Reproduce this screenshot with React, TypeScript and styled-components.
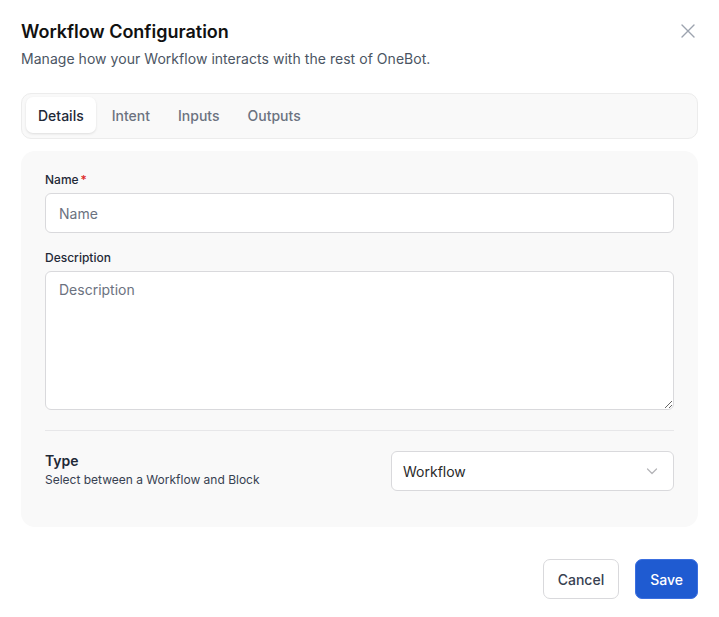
import styled, { createGlobalStyle } from "styled-components";

const GlobalStyle = createGlobalStyle`
  html, body {
    margin: 0;
    padding: 0;
    background: #ffffff;
    font-family: Inter, "Noto Sans", sans-serif;
    color: #111827;
  }
  * { box-sizing: border-box; }
`;

const tabs = ["Details", "Intent", "Inputs", "Outputs"];

const App = () => {
  return (
    <>
      <GlobalStyle />
      <Dialog>
        <Header>
          <HeaderText>
            <Title>Workflow Configuration</Title>
            <Subtitle>Manage how your Workflow interacts with the rest of OneBot.</Subtitle>
          </HeaderText>
          <CloseButton aria-label="Close">
            <svg width="16" height="16" viewBox="0 0 16 16" fill="none">
              <path d="M2 2L14 14M14 2L2 14" stroke="#9ca3af" strokeWidth="1.4" strokeLinecap="round" />
            </svg>
          </CloseButton>
        </Header>

        <TabList>
          {tabs.map((t, i) => (
            <Tab key={t} active={i === 0}>
              {t}
            </Tab>
          ))}
        </TabList>

        <Card>
          <Field>
            <Label>
              Name<Required>*</Required>
            </Label>
            <Input placeholder="Name" />
          </Field>
          <Field>
            <Label>Description</Label>
            <TextArea placeholder="Description" />
          </Field>
          <Divider />
          <TypeRow>
            <div>
              <TypeTitle>Type</TypeTitle>
              <TypeHint>Select between a Workflow and Block</TypeHint>
            </div>
            <Select>
              <span>Workflow</span>
              <svg width="14" height="14" viewBox="0 0 14 14" fill="none">
                <path d="M2.5 5L7 9.5L11.5 5" stroke="#b4b4b8" strokeWidth="1.2" strokeLinecap="round" strokeLinejoin="round" />
              </svg>
            </Select>
          </TypeRow>
        </Card>

        <Footer>
          <Button>Cancel</Button>
          <Button primary>Save</Button>
        </Footer>
      </Dialog>
    </>
  );
};

const Dialog = styled.div`
  width: 719px;
  padding: 18px 21px 18px 21px;
  display: flex;
  flex-direction: column;
`;

const Header = styled.div`
  display: flex;
  justify-content: space-between;
  align-items: flex-start;
`;

const HeaderText = styled.div`
  display: flex;
  flex-direction: column;
  gap: 3px;
`;

const Title = styled.h2`
  margin: 0;
  font-size: 18px;
  line-height: 28px;
  font-weight: 600;
  color: #111111;
`;

const Subtitle = styled.p`
  margin: 0;
  font-size: 14px;
  line-height: 20px;
  color: #4b5563;
  letter-spacing: 0.04px;
`;

const CloseButton = styled.button`
  border: none;
  background: none;
  padding: 0;
  margin: 4px 1px 0 0;
  width: 18px;
  height: 18px;
  display: flex;
  align-items: center;
  justify-content: center;
  cursor: pointer;
`;

const TabList = styled.div`
  margin-top: 24px;
  height: 46px;
  padding: 4px;
  display: flex;
  background: #f9f9f9;
  border: 1px solid #ececec;
  border-radius: 10px;
`;

const Tab = styled.button<{ active?: boolean }>`
  height: 36px;
  padding: 0 12px;
  margin: -1px 4px 0 0;
  border: none;
  border-radius: 7px;
  font-family: inherit;
  font-size: 14px;
  font-weight: 500;
  color: ${(p) => (p.active ? "#1f2937" : "#6b7280")};
  background: ${(p) => (p.active ? "#ffffff" : "transparent")};
  box-shadow: ${(p) => (p.active ? "0 1px 3px rgba(0,0,0,0.08), 0 1px 2px rgba(0,0,0,0.04)" : "none")};
  cursor: pointer;
`;

const Card = styled.div`
  margin-top: 12px;
  background: #f9f9f9;
  border-radius: 14px;
  padding: 21px 24px 36px;
  display: flex;
  flex-direction: column;
  gap: 17px;
`;

const Field = styled.div`
  display: flex;
  flex-direction: column;
  gap: 5px;
`;

const Label = styled.label`
  font-size: 12px;
  line-height: 16px;
  font-weight: 500;
  color: #1f2937;
`;

const Required = styled.span`
  color: #dc2626;
  margin-left: 2px;
`;

const inputBase = `
  width: 100%;
  border: 1px solid #d9d9dc;
  border-radius: 6px;
  background: #ffffff;
  font-family: Inter, "Noto Sans", sans-serif;
  font-size: 14px;
  color: #111827;
  outline: none;
  &::placeholder { color: #6b7280; }
`;

const Input = styled.input`
  ${inputBase}
  height: 40px;
  padding: 0 13px;
`;

const TextArea = styled.textarea`
  ${inputBase}
  height: 139px;
  padding: 8px 13px;
  resize: vertical;
  line-height: 20px;
  display: block;
`;

const Divider = styled.div`
  height: 1px;
  background: #e7e7e9;
  margin: 3px 0 3px;
`;

const TypeRow = styled.div`
  display: flex;
  justify-content: space-between;
  align-items: flex-start;
`;

const TypeTitle = styled.div`
  font-size: 14px;
  line-height: 20px;
  font-weight: 600;
  color: #1f2937;
`;

const TypeHint = styled.div`
  margin-top: 1px;
  font-size: 12px;
  line-height: 16px;
  color: #374151;
`;

const Select = styled.div`
  width: 283px;
  height: 40px;
  border: 1px solid #d9d9dc;
  border-radius: 6px;
  background: #ffffff;
  display: flex;
  align-items: center;
  justify-content: space-between;
  padding: 0 14px 0 11px;
  font-size: 14px;
  color: #2a2a2a;
`;

const Footer = styled.div`
  margin-top: 32px;
  display: flex;
  justify-content: flex-end;
  gap: 16px;
`;

const Button = styled.button<{ primary?: boolean }>`
  height: 40px;
  padding: 0 14px;
  border-radius: 7px;
  font-family: inherit;
  font-size: 14px;
  font-weight: 500;
  cursor: pointer;
  border: 1px solid ${(p) => (p.primary ? "#3b6fe0" : "#d9d9dc")};
  background: ${(p) => (p.primary ? "#1f5bd1" : "#ffffff")};
  color: ${(p) => (p.primary ? "#ffffff" : "#374151")};
`;

export default App;
